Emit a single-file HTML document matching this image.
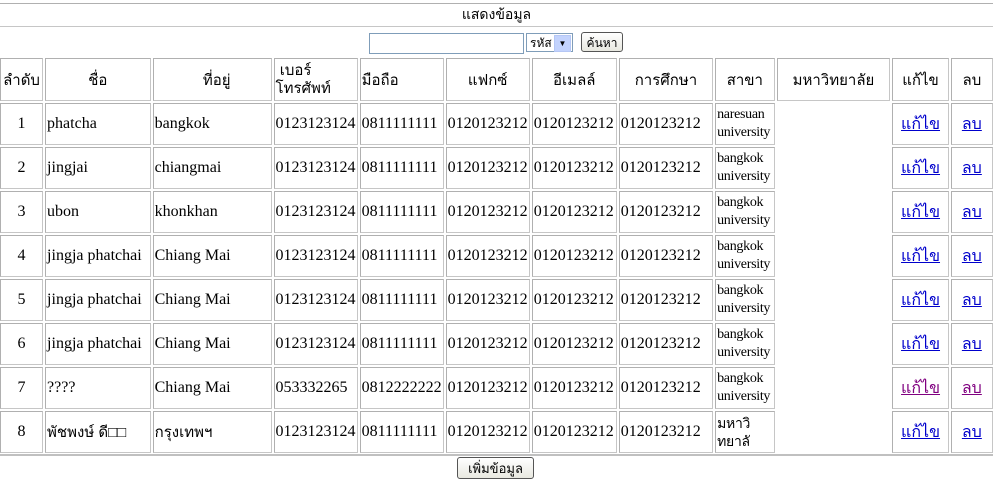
<!DOCTYPE html>
<html><head><meta charset="utf-8"><style>
body{margin:0;background:#fff;width:1007px;height:482px;overflow:hidden;font-family:"Liberation Serif",serif;font-size:16px;color:#000}
table.m{position:absolute;left:-2px;top:1px;width:997px;table-layout:fixed;border-collapse:separate;border-spacing:2px;empty-cells:hide}
.m td{border:1px solid #c6c6c6;border-top-color:#b0b0b0;border-left-color:#b0b0b0;padding:0 1px;height:40px;vertical-align:middle;overflow:hidden;white-space:nowrap}
.m tr.h td{font-family:"Liberation Sans","Noto Sans CJK SC",sans-serif;font-size:15px;text-align:center;height:41px}
.m tr.t td{height:20px;text-align:center;font-family:"Liberation Sans",sans-serif;font-size:14px;border-left:none;border-right:none}
.m tr.s td{height:25px;border-left:none;border-right:none}
.sm{font-size:14px;line-height:18px;white-space:normal!important;letter-spacing:-0.3px}
a{color:#00c}
a.v{color:#800080}
.c{text-align:center}
.f{font-family:"Liberation Sans",sans-serif;font-size:15px}
</style></head><body>
<table class="m">
<colgroup><col style="width:42px"><col style="width:103px"><col style="width:116px"><col style="width:82px"><col style="width:82px"><col style="width:82px"><col style="width:83px"><col style="width:92px"><col style="width:58px"><col style="width:111px"><col style="width:55px"><col style="width:41px"></colgroup>
<tr class="t"><td colspan="12">แสดงข้อมูล</td></tr>
<tr class="s"><td colspan="12" style="position:relative"><div style="position:absolute;left:369px;top:3px;width:153px;height:19px;border:1px solid #7f9db9;background:#fff"></div><div style="position:absolute;left:526px;top:3px;width:47px;height:19px;border:1px solid #7f9db9;font-family:'Liberation Sans',sans-serif;font-size:12px;line-height:19px;padding-left:3px;box-sizing:border-box">รหัส<span style="position:absolute;right:1px;top:1px;width:15px;height:15px;background:#c3d3fd;border:1px solid #b5c7f5;font-size:8px;text-align:center;line-height:15px">▼</span></div><div style="position:absolute;left:581px;top:2px;width:42px;height:20px;border:1px solid #555;border-radius:3px;background:linear-gradient(#fff,#e8e8e0);font-family:'Liberation Sans',sans-serif;font-size:12px;line-height:20px;text-align:center;box-sizing:border-box">ค้นหา</div></td></tr>
<tr class="h"><td>ลำดับ</td><td>ชื่อ</td><td style="text-align:right;padding-right:40px">ที่อยู่</td><td style="text-align:left;line-height:18px;white-space:normal">&nbsp;เบอร์<br>โทรศัพท์</td><td style="text-align:left">มือถือ</td><td>แฟกซ์</td><td>อีเมลล์</td><td>การศึกษา</td><td>สาขา</td><td>มหาวิทยาลัย</td><td>แก้ไข</td><td>ลบ</td></tr>
<tr><td class="c">1</td><td>phatcha</td><td>bangkok</td><td>0123123124</td><td>0811111111</td><td>0120123212</td><td>0120123212</td><td>0120123212</td><td class="sm">naresuan university</td><td></td><td class="c"><a href="#">แก้ไข</a></td><td class="c"><a href="#">ลบ</a></td></tr>
<tr><td class="c">2</td><td>jingjai</td><td>chiangmai</td><td>0123123124</td><td>0811111111</td><td>0120123212</td><td>0120123212</td><td>0120123212</td><td class="sm">bangkok university</td><td></td><td class="c"><a href="#">แก้ไข</a></td><td class="c"><a href="#">ลบ</a></td></tr>
<tr><td class="c">3</td><td>ubon</td><td>khonkhan</td><td>0123123124</td><td>0811111111</td><td>0120123212</td><td>0120123212</td><td>0120123212</td><td class="sm">bangkok university</td><td></td><td class="c"><a href="#">แก้ไข</a></td><td class="c"><a href="#">ลบ</a></td></tr>
<tr><td class="c">4</td><td>jingja phatchai</td><td>Chiang Mai</td><td>0123123124</td><td>0811111111</td><td>0120123212</td><td>0120123212</td><td>0120123212</td><td class="sm">bangkok university</td><td></td><td class="c"><a href="#">แก้ไข</a></td><td class="c"><a href="#">ลบ</a></td></tr>
<tr><td class="c">5</td><td>jingja phatchai</td><td>Chiang Mai</td><td>0123123124</td><td>0811111111</td><td>0120123212</td><td>0120123212</td><td>0120123212</td><td class="sm">bangkok university</td><td></td><td class="c"><a href="#">แก้ไข</a></td><td class="c"><a href="#">ลบ</a></td></tr>
<tr><td class="c">6</td><td>jingja phatchai</td><td>Chiang Mai</td><td>0123123124</td><td>0811111111</td><td>0120123212</td><td>0120123212</td><td>0120123212</td><td class="sm">bangkok university</td><td></td><td class="c"><a href="#">แก้ไข</a></td><td class="c"><a href="#">ลบ</a></td></tr>
<tr><td class="c">7</td><td>????</td><td>Chiang Mai</td><td>053332265</td><td>0812222222</td><td>0120123212</td><td>0120123212</td><td>0120123212</td><td class="sm">bangkok university</td><td></td><td class="c"><a class="v" href="#">แก้ไข</a></td><td class="c"><a class="v" href="#">ลบ</a></td></tr>
<tr><td class="c">8</td><td class="f">พัชพงษ์ ดี□□</td><td class="f">กรุงเทพฯ</td><td>0123123124</td><td>0811111111</td><td>0120123212</td><td>0120123212</td><td>0120123212</td><td class="sm f" style="font-size:14px">มหาวิ ทยาลั</td><td></td><td class="c"><a href="#">แก้ไข</a></td><td class="c"><a href="#">ลบ</a></td></tr>
</table>
<div style="position:absolute;left:0;top:454px;width:993px;height:0;border-top:2px solid #c0c0c0"></div>
<div style="position:absolute;left:457px;top:457px;width:77px;height:22px;border:1px solid #555;border-radius:3px;background:linear-gradient(#fff,#e8e8e0);font-family:'Liberation Sans',sans-serif;font-size:13px;line-height:22px;text-align:center;box-sizing:border-box">เพิ่มข้อมูล</div>
</body></html>
